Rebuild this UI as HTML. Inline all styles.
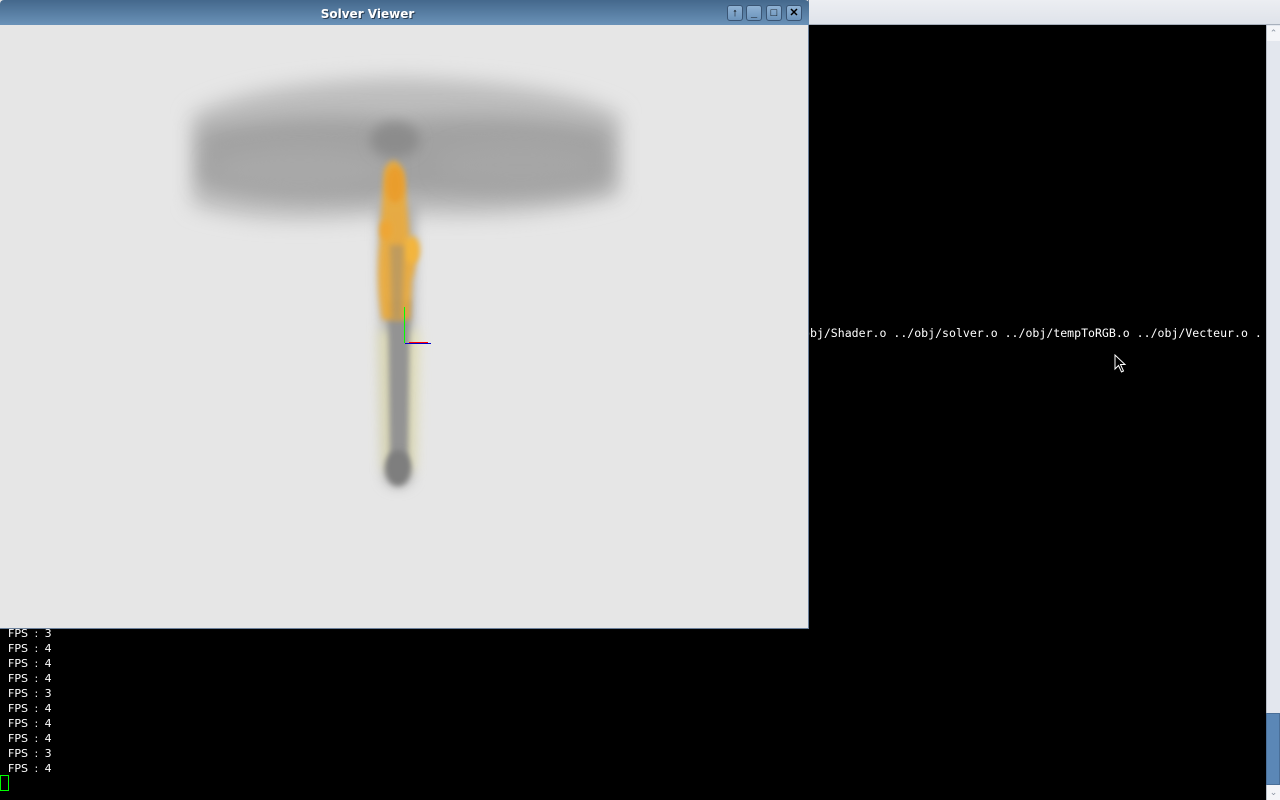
<!DOCTYPE html>
<html><head><meta charset="utf-8"><style>
html,body{margin:0;padding:0;width:1280px;height:800px;overflow:hidden;background:#000;position:relative;font-family:"Liberation Sans",sans-serif}
.topstrip{position:absolute;left:0;top:0;width:1280px;height:24px;background:linear-gradient(#eceef2,#dfe3ea);border-bottom:1px solid #a8b0bc}
.sb{position:absolute;left:1266px;top:25px;width:14px;height:775px;background:#e3e7ee;border-left:1px solid #b8bec8}
.thumb{position:absolute;left:1266px;top:713px;width:14px;height:72px;background:#5b87b6;border:1px solid #4a6f98;box-sizing:border-box}
.arr{position:absolute;left:1267px;width:13px;height:15px;background:#f4f5f8;color:#8a93a0;font-size:9px;text-align:center;line-height:15px}
.mono{position:absolute;font-family:"DejaVu Sans Mono",monospace;font-size:11.55px;color:#fff;white-space:pre}
.fps{position:absolute;left:8px;font-family:"DejaVu Sans","Liberation Sans",sans-serif;font-size:11px;color:#fff;white-space:pre;word-spacing:3px}
.win{position:absolute;left:0;top:0;width:809px;height:629px;background:#e6e6e6;border-right:1px solid #6a7f9a;border-bottom:1px solid #6a7f9a;box-sizing:border-box}
.title{position:absolute;left:0;top:0;width:809px;height:25px;background:linear-gradient(#44688c,#6a92b8);border-radius:4px 4px 0 0}
.title span{position:absolute;left:0;width:735px;top:7px;text-align:center;color:#fff;font-weight:bold;font-size:12px;text-shadow:1px 1px 0 #2a3d52;font-family:"DejaVu Sans",sans-serif}
.btn{position:absolute;top:5px;width:16px;height:16px;border:1px solid #3a5574;border-radius:3px;background:linear-gradient(#8fb2d4,#6c94bc);box-sizing:border-box;color:#000;font-size:11px;font-weight:bold;text-align:center;line-height:14px}
</style></head><body>
<div class="topstrip"></div>
<div class="mono" style="left:803px;top:326px">obj/Shader.o ../obj/solver.o ../obj/tempToRGB.o ../obj/Vecteur.o .</div>
<svg style="position:absolute;left:1114px;top:354px" width="14" height="20"><path d="M1 1 L1 15 L4.5 11.5 L7.5 18 L9.5 17 L6.5 10.5 L11 10.5 Z" fill="#000" stroke="#fff" stroke-width="1"/></svg>
<div class="fps" style="top:627px">FPS : 3</div>
<div class="fps" style="top:642px">FPS : 4</div>
<div class="fps" style="top:657px">FPS : 4</div>
<div class="fps" style="top:672px">FPS : 4</div>
<div class="fps" style="top:687px">FPS : 3</div>
<div class="fps" style="top:702px">FPS : 4</div>
<div class="fps" style="top:717px">FPS : 4</div>
<div class="fps" style="top:732px">FPS : 4</div>
<div class="fps" style="top:747px">FPS : 3</div>
<div class="fps" style="top:762px">FPS : 4</div>
<div style="position:absolute;left:0;top:775px;width:9px;height:16px;border:1px solid #0f0;box-sizing:border-box"></div>
<div class="sb"></div>
<div class="arr" style="top:26px">&#8963;</div>
<div class="thumb"></div>
<div class="arr" style="top:785px">&#8964;</div>
<div class="win">
<svg style="position:absolute;left:0;top:25px" width="808" height="603">
<defs>
<filter id="b12" x="-50%" y="-50%" width="200%" height="200%"><feGaussianBlur stdDeviation="10"/></filter>
<filter id="b6" x="-50%" y="-50%" width="200%" height="200%"><feGaussianBlur stdDeviation="6"/></filter>
<filter id="b3" x="-50%" y="-50%" width="200%" height="200%"><feGaussianBlur stdDeviation="3"/></filter>
</defs>
<g transform="translate(0,-25)">
<path d="M192 115 Q250 82 400 78 Q560 82 620 115 L620 195 Q540 220 420 215 L380 215 Q260 228 192 205 Z" fill="#bdbdbd" filter="url(#b12)"/>
<path d="M200 130 Q300 110 400 120 Q520 110 610 130 L610 185 Q520 200 420 195 Q300 205 200 185 Z" fill="#a2a2a2" filter="url(#b12)"/>
<ellipse cx="300" cy="170" rx="90" ry="22" fill="#a8a8a8" filter="url(#b12)"/>
<ellipse cx="520" cy="165" rx="80" ry="22" fill="#a6a6a6" filter="url(#b12)"/>
<ellipse cx="395" cy="140" rx="25" ry="18" fill="#8c8c8c" filter="url(#b6)"/>
<path d="M378 200 L416 200 L412 480 Q398 495 384 480 Z" fill="#b0b0b0" filter="url(#b6)"/>
<path d="M378 330 L420 330 L416 470 L382 470 Z" fill="#eeeab8" opacity="0.7" filter="url(#b6)"/>
<path d="M388 300 L410 300 L408 470 L390 470 Z" fill="#939393" filter="url(#b3)"/>
<ellipse cx="398" cy="468" rx="13" ry="18" fill="#7e7e7e" filter="url(#b3)"/>
<path d="M384 170 Q394 150 404 172 L410 240 Q420 260 412 280 L410 320 L382 320 Q375 280 380 240 Z" fill="#f0aa30" opacity="0.85" filter="url(#b3)"/>
<ellipse cx="395" cy="185" rx="9" ry="18" fill="#ea9c2a" opacity="0.9" filter="url(#b3)"/>
<ellipse cx="412" cy="250" rx="8" ry="14" fill="#f3b53c" filter="url(#b3)"/>
<ellipse cx="386" cy="230" rx="6" ry="10" fill="#eea634" filter="url(#b3)"/>
<path d="M390 245 L404 245 L402 320 L392 320 Z" fill="#a69270" opacity="0.6" filter="url(#b3)"/>
<line x1="404.5" y1="307" x2="404.5" y2="343" stroke="#00ff00" stroke-width="1"/>
<line x1="405" y1="343.5" x2="431" y2="343.5" stroke="#0000cc" stroke-width="1"/>
<line x1="409" y1="342.5" x2="428" y2="342.5" stroke="#ff0000" stroke-width="1"/>
</g>
</svg>
<div class="title"><span>Solver Viewer</span>
<div class="btn" style="left:727px">&#8593;</div>
<div class="btn" style="left:746px">_</div>
<div class="btn" style="left:766px">&#9633;</div>
<div class="btn" style="left:786px">&#10005;</div>
</div>
</div>
</body></html>
